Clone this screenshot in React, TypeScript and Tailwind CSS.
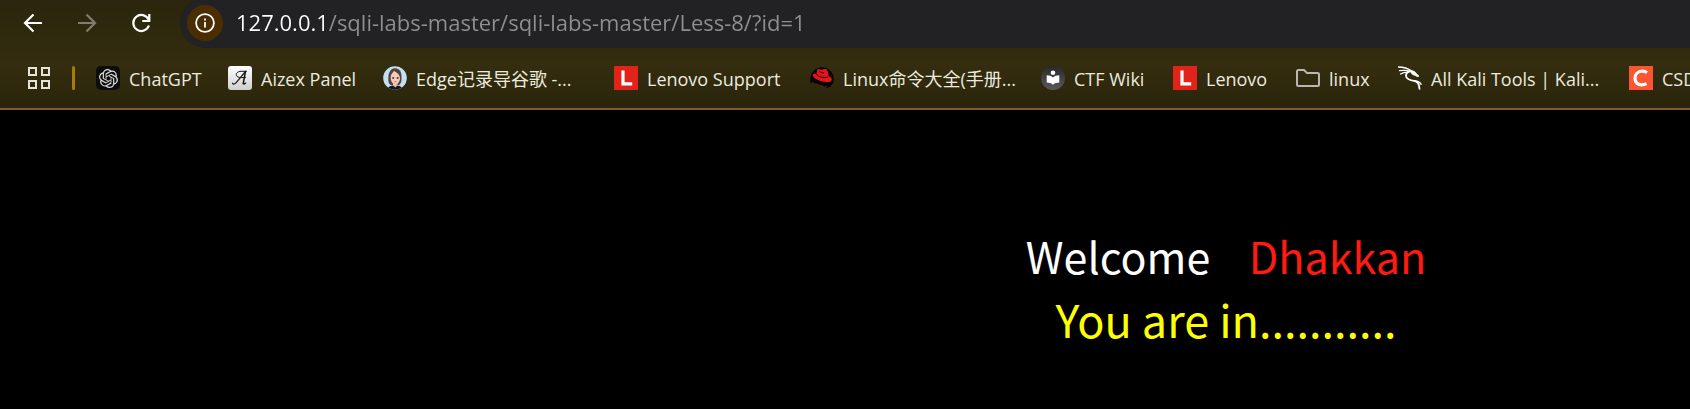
import type { ReactNode } from "react";
import { SiOpenai } from "react-icons/si";

function ChatGptIcon() {
  return (
    <span className="flex size-6 items-center justify-center rounded-[5px] bg-[#0d0d0d]">
      <SiOpenai className="size-[19px] text-[#d8d8d8]" />
    </span>
  );
}

function AizexIcon() {
  return (
    <svg viewBox="0 0 24 24" className="size-6">
      <defs>
        <linearGradient id="aizex" x1="0" y1="0" x2="0" y2="1">
          <stop offset="0" stopColor="#ffffff" />
          <stop offset="1" stopColor="#cfcfcf" />
        </linearGradient>
      </defs>
      <rect width="24" height="24" rx="3" fill="url(#aizex)" />
      <g fill="none" stroke="#161616" strokeLinecap="round" strokeLinejoin="round">
        <path d="M4.500 17.200c.8 1.600 2.500.8 3.700-.6L17.500 5.500" strokeWidth="1.200" />
        <path d="M17.500 5.500 15.200 17.300c-.1 1 .9.900 2.300-.1" strokeWidth="1.500" />
        <path d="M18.500 5.300H13C9.800 5.400 7.800 7.300 8.300 9.300c.5 1.600 2.700 2.300 5.200 2.300h4" strokeWidth="1" />
      </g>
    </svg>
  );
}

function PortraitIcon() {
  return (
    <svg viewBox="0 0 24 24" className="size-6">
      <defs>
        <clipPath id="portrait">
          <circle cx="12" cy="12" r="11.800" />
        </clipPath>
      </defs>
      <g clipPath="url(#portrait)">
        <rect width="24" height="24" fill="#c3e0f2" />
        <path d="M5.800 17C4.500 11 5.500 3 11.500 2.300c6-.3 7.800 4.700 6.800 13.700l-2 3H7.500z" fill="#54403c" />
        <path d="M4.500 24c.5-3.500 3-4.200 5-4.500h5c3 .5 4.500 1.500 5 4.500z" fill="#17171c" />
        <path d="M10 16h4.500v3.500l-2.200 2L10 19.500z" fill="#e9b9a5" />
        <path d="M7.700 12c-.2-3.500 1.800-4.800 3.300-7 2.500 1.500 6 3 6 7.500-.1 3.500-2.500 5.800-4.700 5.800S7.900 16 7.700 12z" fill="#f3cbbb" />
        <circle cx="10.200" cy="12" r="1" fill="#4a3232" />
        <circle cx="14.600" cy="12" r="1" fill="#4a3232" />
        <path d="M11.600 15.700h1.800" stroke="#c4575a" strokeWidth=".9" />
      </g>
    </svg>
  );
}

function LenovoIcon() {
  return (
    <svg viewBox="0 0 24 24" className="size-6">
      <rect width="24" height="24" fill="#e2231a" />
      <path d="M9 4.500v13.300h9.200" fill="none" stroke="#fff" strokeWidth="3.200" />
    </svg>
  );
}

function RedHatIcon() {
  return (
    <svg viewBox="0 0 24 24" className="size-6">
      <path d="M.3 17.500C-.8 8 4.500 1.200 12 1.200S24.500 8 23.800 14.500c-.5 3-1.800 4.700-3.300 5.800l-3.500 2-.8-.8 1.400-1.500-3.100.3L5.500 17l-1 .5-2-1.800z" fill="#070504" />
      <path d="M7.500 3.200c1.400-.8 3 .6 4.500.6 1.600-.4 3.600-1.300 4.700-.2 1.500 1.600 1.700 4.200 2.100 6.300 1.800.9 3.500 2.300 3 4-1 2.600-6.500 2.600-11 1.200C6.300 13.800 2 11 2.800 8.600c.4-1.200 2-1.100 3.500-.6z" fill="#e3141b" />
      <path d="M6.300 8c1 2.500 8 4.800 12 2.800M9.500 5.500l3 1.500 1.500-.7" fill="none" stroke="#1a0505" strokeWidth="1" />
    </svg>
  );
}

function CtfWikiIcon() {
  return (
    <svg viewBox="0 0 24 24" className="size-6">
      <defs>
        <linearGradient id="ctf" x1="0" y1="0" x2="0" y2="1">
          <stop offset="0" stopColor="#29292b" />
          <stop offset="1" stopColor="#5a5a5c" />
        </linearGradient>
      </defs>
      <circle cx="12" cy="12" r="12" fill="url(#ctf)" />
      <circle cx="12" cy="6.800" r="2.300" fill="#fff" />
      <path d="M5.700 9.300c2.500 0 4.700.8 6.300 2.200 1.600-1.400 3.800-2.200 6.300-2.200v7.200c-2.500 0-4.700.8-6.300 2.200-1.600-1.400-3.800-2.200-6.300-2.200z" fill="#fff" />
    </svg>
  );
}

function FolderIcon() {
  return (
    <svg viewBox="0 0 24 24" className="size-6" fill="none" stroke="#b9b7b0" strokeWidth="2">
      <path d="M2.500 4H8l3 3h10.500q1.500 0 1.500 1.500v10q0 1.500-1.500 1.500h-19Q1 20 1 18.500v-13Q1 4 2.500 4z" />
    </svg>
  );
}

function KaliIcon() {
  return (
    <svg viewBox="0 0 24 24" className="size-6" fill="none" stroke="#fff" strokeLinecap="round" strokeLinejoin="round">
      <path d="M.6 1c4.500.2 8.500 1 12.400 3.600" strokeWidth="1.400" />
      <path d="M1.500 4.700c4-.6 7.500-.5 11 .8" strokeWidth="1.300" />
      <path d="M2.500 8c2-1.300 4.500-1.900 7.500-1.900" strokeWidth="1.200" />
      <path d="M12.500 4.600c2.500 0 4.500.8 5.800 3l2.700 2.600-1.800.3-2.400-1.300c-2-.2-3-1.200-3.800-2.700z" fill="#fff" strokeWidth=".8" />
      <path d="M12.500 5C9 5.800 7.300 8.300 8.300 11c1.200 3 4.500 3.400 8 3.900 3.700.7 5 3.800 5.200 7.800" strokeWidth="1.900" />
      <path d="M16.500 15c3-.2 5.200 1 6.700 3.300" strokeWidth="1.300" />
    </svg>
  );
}

function CsdnIcon() {
  return (
    <svg viewBox="0 0 24 24" className="size-6">
      <rect width="24" height="24" fill="#fc5531" />
      <path d="M18 6.600C16.500 5.600 15 5.200 13.200 5.200 8.800 5.200 6 8.300 6 12.300c0 4 2.500 6.500 6.600 6.500 1.900 0 3.400-.4 4.900-1.200" fill="none" stroke="#fff" strokeWidth="3.200" />
    </svg>
  );
}

type Bookmark = { label: string; icon: ReactNode; width: string };

const bookmarks: Bookmark[] = [
  { label: "ChatGPT", icon: <ChatGptIcon />, width: "w-[132px]" },
  { label: "Aizex Panel", icon: <AizexIcon />, width: "w-[155px]" },
  { label: "Edge记录导谷歌 -...", icon: <PortraitIcon />, width: "w-[231px]" },
  { label: "Lenovo Support", icon: <LenovoIcon />, width: "w-[196px]" },
  { label: "Linux命令大全(手册...", icon: <RedHatIcon />, width: "w-[231px]" },
  { label: "CTF Wiki", icon: <CtfWikiIcon />, width: "w-[132px]" },
  { label: "Lenovo", icon: <LenovoIcon />, width: "w-[123px]" },
  { label: "linux", icon: <FolderIcon />, width: "w-[102px]" },
  { label: "All Kali Tools | Kali...", icon: <KaliIcon />, width: "w-[231px]" },
  { label: "CSDN", icon: <CsdnIcon />, width: "w-[132px]" },
];

function Toolbar() {
  return (
    <div className="flex h-12 items-end overflow-hidden">
      <div className="flex h-[50px] w-45 shrink-0 items-center gap-[30px] pl-[21px]">
        <button aria-label="Back" className="text-white">
          <svg viewBox="0 0 24 24" className="size-6" fill="none" stroke="currentColor" strokeWidth="2.200">
            <path d="M21 12H4M12.500 3.500 4 12l8.500 8.500" />
          </svg>
        </button>
        <button aria-label="Forward" className="text-[#827d6c]">
          <svg viewBox="0 0 24 24" className="size-6" fill="none" stroke="currentColor" strokeWidth="2.200">
            <path d="M3 12h17M11.500 3.500 20 12l-8.500 8.500" />
          </svg>
        </button>
        <button aria-label="Reload" className="text-white">
          <svg viewBox="0 0 24 24" className="size-6" fill="none" stroke="currentColor" strokeWidth="2.200">
            <path d="M19.900 14.500A8 8 0 1 1 19.500 8.500M20.300 3v7h-7" />
          </svg>
        </button>
      </div>
      <div className="flex h-[50px] min-w-0 flex-1 items-center rounded-l-full bg-[#222224] pl-[7px]">
        <button aria-label="Site information" className="flex size-9 shrink-0 items-center justify-center rounded-full bg-[#4b2d02] text-white">
          <svg viewBox="0 0 20 20" className="size-5" fill="none" stroke="currentColor" strokeWidth="1.800">
            <circle cx="10" cy="10" r="8.900" />
            <path d="M10 9v5.500M10 5.500v2" />
          </svg>
        </button>
        <input
          aria-label="Address"
          defaultValue="127.0.0.1/sqli-labs-master/sqli-labs-master/Less-8/?id=1"
          className="ml-[13px] min-w-0 flex-1 bg-linear-to-r from-white from-[91px] to-[#8f8f91] to-[91px] bg-clip-text pb-[2px] text-[22px] leading-8 text-transparent outline-none"
        />
      </div>
    </div>
  );
}

function BookmarksBar() {
  return (
    <nav aria-label="Bookmarks" className="flex h-[60px] items-center overflow-hidden pl-7 text-[18px] text-[#eceadf]">
      <button aria-label="Apps" className="shrink-0">
        <svg viewBox="0 0 22 22" className="size-[22px]" fill="none" stroke="#e6e3d8" strokeWidth="2">
          <path d="M1 1h7v7H1zM14 1h7v7h-7zM1 14h7v7H1zM14 14h7v7h-7z" />
        </svg>
      </button>
      <span className="mr-[21px] ml-[22px] h-6 w-[3px] shrink-0 rounded-full bg-[#ac7a08]" />
      {bookmarks.map((b) => (
        <a key={b.label} href="#" className={`flex shrink-0 items-center gap-[9px] whitespace-nowrap ${b.width}`}>
          <span className="shrink-0">{b.icon}</span>
          <span className="pt-[2px]">{b.label}</span>
        </a>
      ))}
    </nav>
  );
}

export default function App() {
  return (
    <div className="flex min-h-screen flex-col overflow-hidden bg-black">
      <header className="border-b-2 border-[#7b5b39] bg-linear-to-b from-[#2a250c] via-[#342d0f] via-60% to-[#2a240b] font-['Open_Sans','Noto_Sans_CJK_SC',sans-serif]">
        <Toolbar />
        <BookmarksBar />
      </header>
      <main className="pt-[113px] pl-[762px] text-center font-['Noto_Sans_CJK_SC',sans-serif] leading-16 whitespace-pre text-white">
        <p className="text-[43px] leading-16">
          Welcome{"\u00a0\u00a0\u00a0 "}
          <span className="text-[#ff1a12]">Dhakkan</span>
        </p>
        <p className="text-[45px] leading-16 text-[#ffff00]">You are in...........</p>
      </main>
    </div>
  );
}
